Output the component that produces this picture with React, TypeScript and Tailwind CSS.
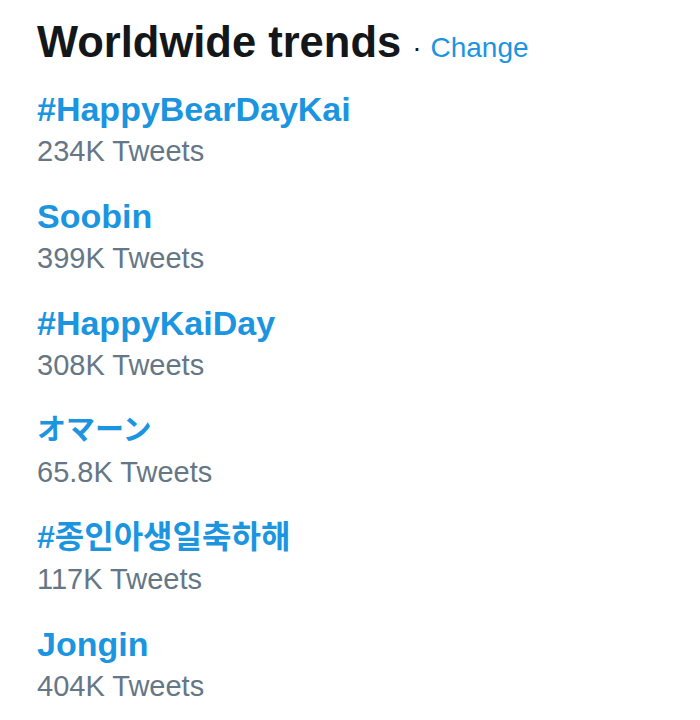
import React from "react";

interface Trend {
  name: string;
  count: string;
  nameClass?: string;
}

const trends: Trend[] = [
  { name: "#HappyBearDayKai", count: "234K Tweets" },
  { name: "Soobin", count: "399K Tweets" },
  { name: "#HappyKaiDay", count: "308K Tweets" },
  { name: "オマーン", count: "65.8K Tweets", nameClass: "text-[29px]" },
  { name: "#종인아생일축하해", count: "117K Tweets", nameClass: "text-[32px]" },
  { name: "Jongin", count: "404K Tweets" },
];

export default function App() {
  return (
    <div className="w-[700px] h-[720px] bg-white pl-[37px] pt-[17px] [font-family:'Liberation_Sans','Noto_Sans_CJK_JP','Noto_Sans_CJK_KR',sans-serif]">
      <div className="flex items-baseline">
        <h2 className="text-[43.5px] font-bold text-[#14171a] leading-[50px]">
          Worldwide trends
        </h2>
        <span className="ml-[11px] text-[28px] text-[#14171a]">·</span>
        <a className="ml-[9px] text-[28px] text-[#1b95e0]">Change</a>
      </div>
      <ul className="flex flex-col mt-[20px]">
        {trends.map((t) => (
          <li key={t.name} className="h-[107px]">
            <div
              className={
                "font-bold text-[#1b95e0] leading-[40px] " +
                (t.nameClass ?? "text-[34px]")
              }
            >
              {t.name}
            </div>
            <div className="mt-[5px] text-[29px] text-[#657786] leading-[34px]">
              {t.count}
            </div>
          </li>
        ))}
      </ul>
    </div>
  );
}
